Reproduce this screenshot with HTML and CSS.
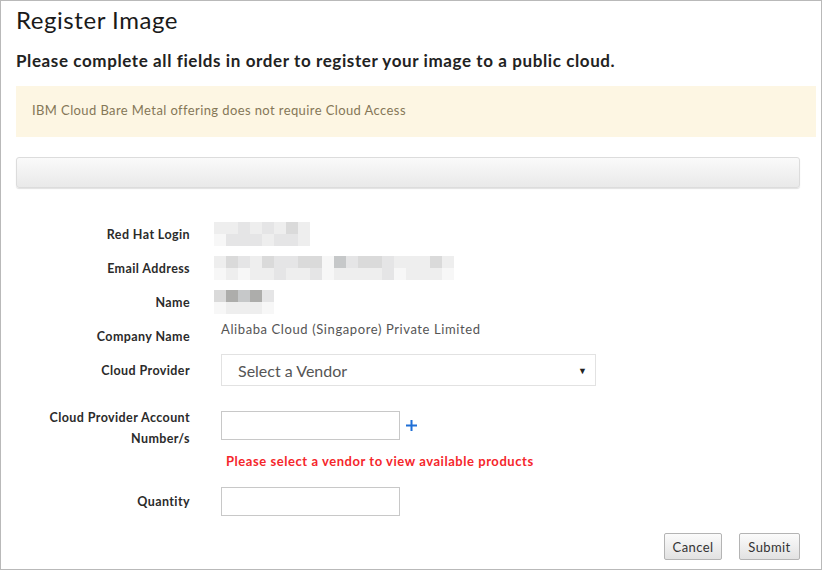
FILE: index.html
```html
<!DOCTYPE html>
<html lang="en">
<head>
<meta charset="utf-8">
<title>Register Image</title>
<link rel="stylesheet" href="styles.css">
</head>
<body>
<div class="frame">
  <h1 class="title">Register Image</h1>
  <p class="subtitle">Please complete all fields in order to register your image to a public cloud.</p>
  <div class="alert">IBM Cloud Bare Metal offering does not require Cloud Access</div>
  <div class="bar"></div>

  <div class="form">
    <div class="row">
      <div class="label">Red Hat Login</div>
      <div class="value"><div class="blur">
        <div class="brow"><i class="g1"></i><i class="g1"></i><i class="g2"></i><i class="g1"></i><i class="g2"></i><i class="g1"></i><i class="g3"></i><i class="g1"></i></div>
        <div class="brow"><i class="g0"></i><i class="g2"></i><i class="g2"></i><i class="g2"></i><i class="g1"></i><i class="g2"></i><i class="g2"></i><i class="g1"></i></div>
      </div></div>
    </div>
    <div class="row">
      <div class="label">Email Address</div>
      <div class="value"><div class="blur">
        <div class="brow"><i class="g1"></i><i class="g3"></i><i class="g2"></i><i class="g1"></i><i class="g3"></i><i class="g2"></i><i class="g2"></i><i class="g3"></i><i class="g3"></i><i class="g0"></i><i class="g4"></i><i class="g2"></i><i class="g3"></i><i class="g3"></i><i class="g2"></i><i class="g1"></i><i class="g1"></i><i class="g1"></i><i class="g3"></i><i class="g1"></i></div>
        <div class="brow"><i class="g0"></i><i class="g1"></i><i class="g0"></i><i class="g1"></i><i class="g1"></i><i class="g2"></i><i class="g1"></i><i class="g1"></i><i class="g2"></i><i class="g0"></i><i class="g1"></i><i class="g1"></i><i class="g1"></i><i class="g1"></i><i class="g2"></i><i class="g0"></i><i class="g1"></i><i class="g1"></i><i class="g1"></i><i class="g0"></i></div>
      </div></div>
    </div>
    <div class="row">
      <div class="label">Name</div>
      <div class="value"><div class="blur">
        <div class="brow"><i class="g3"></i><i class="g5"></i><i class="g4"></i><i class="g5"></i><i class="g2"></i></div>
        <div class="brow"><i class="g0"></i><i class="g1"></i><i class="g1"></i><i class="g1"></i><i class="g0"></i></div>
      </div></div>
    </div>
    <div class="row">
      <div class="label">Company Name</div>
      <div class="value company">Alibaba Cloud (Singapore) Private Limited</div>
    </div>
    <div class="row">
      <div class="label">Cloud Provider</div>
      <div class="value">
        <div class="select"><span>Select a Vendor</span><span class="caret">&#9660;</span></div>
      </div>
    </div>
    <div class="row row-account">
      <div class="label label-multi">Cloud Provider Account<br>Number/s</div>
      <div class="value account">
        <div class="input"></div>
        <svg class="plus" width="13" height="13" viewBox="0 0 13 13"><path d="M6.5 1v11M1 6.5h11" stroke="#1f6fd6" stroke-width="2" fill="none"/></svg>
      </div>
    </div>
    <div class="row row-error">
      <div class="label"></div>
      <div class="value error">Please select a vendor to view available products</div>
    </div>
    <div class="row row-qty">
      <div class="label">Quantity</div>
      <div class="value"><div class="input"></div></div>
    </div>
  </div>

  <div class="actions">
    <button class="btn btn-cancel">Cancel</button>
    <button class="btn btn-submit">Submit</button>
  </div>
</div>
</body>
</html>
```

FILE: styles.css
```css
* { box-sizing: border-box; }
html, body { margin: 0; padding: 0; background: #fff; }
body { font-family: Lato, "Liberation Sans", sans-serif; color: #222; }

.frame {
  width: 822px;
  height: 570px;
  border: 1px solid #b9b9b9;
  padding: 0 21px 0 15px;
  overflow: hidden;
}

.title {
  margin: 0;
  padding-top: 5px;
  font-size: 24px;
  line-height: 28px;
  font-weight: 400;
  letter-spacing: 0.55px;
  color: #1a1a1a;
}

.subtitle {
  margin: 16px 0 0;
  font-size: 17px;
  line-height: 22px;
  font-weight: 700;
  letter-spacing: 0.6px;
  color: #222;
}

.alert {
  margin: 14px -16px 0 0;
  height: 51px;
  background: #fdf6e3;
  padding: 0 16px 3px;
  display: flex;
  align-items: center;
  font-size: 13px;
  letter-spacing: 0.4px;
  color: #857757;
}

.bar {
  margin-top: 20px;
  height: 31px;
  border: 1px solid #dcdcdc;
  border-radius: 3px;
  background: linear-gradient(#fafafa, #e9e9e9);
  box-shadow: 0 1px 1px rgba(0,0,0,0.12);
}

.form {
  margin-top: 29px;
  display: flex;
  flex-direction: column;
}

.row {
  display: grid;
  grid-template-columns: 174px 1fr;
  column-gap: 31px;
  align-items: center;
  min-height: 34px;
}

.label {
  text-align: right;
  font-size: 12.5px;
  font-weight: 700;
  letter-spacing: 0.4px;
  color: #2b2b2b;
}

.value { display: flex; align-items: center; }

.blur { margin-left: -7px; display: flex; flex-direction: column; }
.brow { display: flex; }
.brow i { display: block; width: 12px; height: 12px; }
.g0 { background: #f7f7f7; }
.g1 { background: #eeeeee; }
.g2 { background: #e5e5e6; }
.g3 { background: #dadada; }
.g4 { background: #c6c8c9; }
.g5 { background: #adadab; }

.company {
  font-size: 13px;
  letter-spacing: 0.6px;
  color: #555;
  margin-bottom: 14px;
}

.select {
  width: 375px;
  height: 32px;
  border: 1px solid #e2e2e2;
  display: flex;
  align-items: center;
  justify-content: space-between;
  padding: 0 8px 0 16px;
  font-size: 16px;
  color: #555;
}
.caret { font-size: 9px; color: #222; }

.row-account { align-items: start; margin-top: 20px; min-height: 46px; }
.label-multi { line-height: 21px; }
.account { margin-top: 4px; gap: 5px; align-items: center; }
.input {
  width: 179px;
  height: 29px;
  border: 1px solid #c8c8c8;
  background: #fff;
}

.row-error { min-height: 18px; margin-top: -1px; }
.error {
  font-size: 13px;
  font-weight: 700;
  letter-spacing: 0.55px;
  color: #f5262b;
  padding-left: 5px;
}

.row-qty { margin-top: 17px; min-height: 29px; }

.actions {
  margin-top: 17px;
  display: flex;
  justify-content: flex-end;
  gap: 17px;
}
.btn {
  height: 27px;
  padding: 0;
  border: 1px solid #b4b4b4;
  border-radius: 2px;
  background: linear-gradient(#fbfbfb, #e2e2e2);
  font-family: Lato, "Liberation Sans", sans-serif;
  font-size: 13px;
  letter-spacing: 0.4px;
  color: #333;
}
.btn-cancel { width: 58px; }
.btn-submit { width: 61px; }
```
